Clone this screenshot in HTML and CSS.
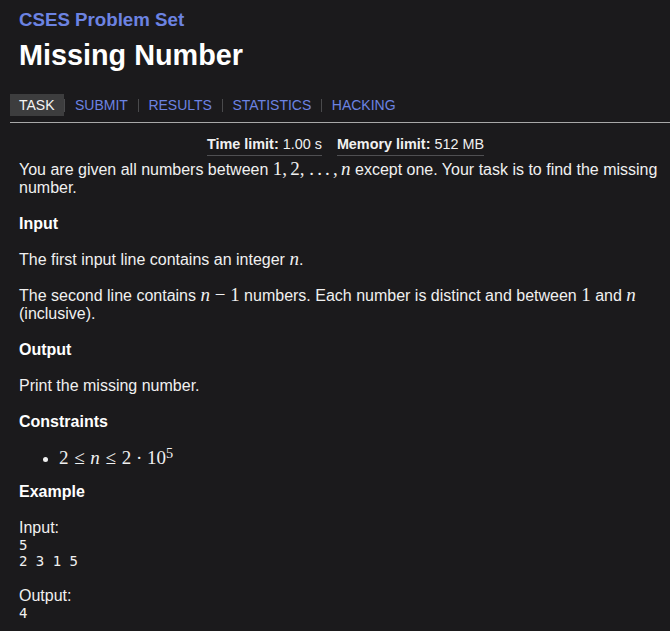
FILE: index.html
```html
<!DOCTYPE html>
<html lang="en">
<head>
<meta charset="utf-8">
<title>CSES - Missing Number</title>
<link rel="stylesheet" href="styles.css">
</head>
<body>
<header class="header">
  <a class="site-title" href="#">CSES Problem Set</a>
  <h1 class="page-title">Missing Number</h1>
</header>
<nav class="nav">
  <a class="nav-item current" href="#">TASK</a>
  <span class="sep"></span>
  <a class="nav-item" href="#">SUBMIT</a>
  <span class="sep"></span>
  <a class="nav-item" href="#">RESULTS</a>
  <span class="sep"></span>
  <a class="nav-item" href="#">STATISTICS</a>
  <span class="sep"></span>
  <a class="nav-item" href="#">HACKING</a>
</nav>
<main class="content">
  <ul class="limits">
    <li class="limit"><b>Time limit:</b> 1.00 s</li>
    <li class="limit"><b>Memory limit:</b> 512 MB</li>
  </ul>
  <div class="statement">
    <p class="para">You are given all numbers between <span class="m">1,<span class="th"></span>2,<span class="th"></span><span class="dots">...</span>,<span class="th"></span><i>n</i></span> except one. Your task is to find the missing number.</p>
    <h2 class="sub">Input</h2>
    <p class="para">The first input line contains an integer <span class="m"><i>n</i></span>.</p>
    <p class="para">The second line contains <span class="m"><i>n</i><span class="bin">−</span>1</span> numbers. Each number is distinct and between <span class="m">1</span> and <span class="m"><i>n</i></span> (inclusive).</p>
    <h2 class="sub">Output</h2>
    <p class="para">Print the missing number.</p>
    <h2 class="sub">Constraints</h2>
    <ul class="constraints">
      <li class="constraint"><span class="m">2<span class="rel">≤</span><i>n</i><span class="rel">≤</span>2<span class="bin">·</span>10<sup class="sup">5</sup></span></li>
    </ul>
    <h2 class="sub">Example</h2>
    <p class="label">Input:</p>
    <pre class="sample">5
2 3 1 5</pre>
    <p class="label">Output:</p>
    <pre class="sample">4</pre>
  </div>
</main>
</body>
</html>
```
FILE: styles.css
```css
html, body {
  background: #1b1a1c;
}
body {
  margin: 0;
  color: #f0f0f0;
  font-family: "Liberation Sans", Arial, sans-serif;
  font-size: 16px;
  line-height: 18px;
}
.header {
  padding: 9px 0 0 19px;
}
.site-title {
  display: block;
  font-size: 18.7px;
  line-height: 22px;
  font-weight: bold;
  color: #6c83e2;
  text-decoration: none;
}
.page-title {
  margin: 7px 0 0;
  font-size: 28.8px;
  line-height: 34px;
  font-weight: bold;
  color: #ffffff;
}
.nav {
  display: flex;
  align-items: center;
  margin: 22px 0 0 10px;
  padding-bottom: 6px;
  border-bottom: 1px solid #a8a8a8;
}
.nav-item {
  font-size: 14px;
  line-height: 16px;
  padding: 3px 9px;
  color: #6c83e2;
  text-decoration: none;
}
.nav-item.current {
  background: #3d3d3e;
  color: #f4f4f4;
}
.sep {
  width: 1px;
  height: 13px;
  margin: 0 0.75px;
  background: #4a4a4c;
}
.content {
  padding: 0 5px 0 19px;
}
.limits {
  display: flex;
  justify-content: center;
  gap: 15px;
  list-style: none;
  margin: 13px 0 0;
  padding: 0 0 0 7px;
}
.limit {
  font-size: 14.4px;
  line-height: 16px;
  padding-bottom: 3px;
  border-bottom: 1px solid #4f4f52;
}
.statement {
  margin-top: 5px;
}
.para {
  margin: 0 0 18px;
}
.sub {
  margin: 0 0 18px;
  font-size: 16px;
  line-height: 18px;
  font-weight: bold;
  color: #ffffff;
}
.m {
  font-family: "Liberation Serif", "Times New Roman", serif;
  font-size: 19px;
  line-height: 0;
}
.m i {
  font-style: italic;
}
.th {
  display: inline-block;
  width: 0.167em;
}
.dots {
  letter-spacing: 0.17em;
  margin-left: 0.08em;
}
.rel {
  margin: 0 0.3em;
}
.bin {
  margin: 0 0.25em;
}
.sup {
  font-size: 0.75em;
  line-height: 0;
  vertical-align: 0.42em;
}
.constraints {
  margin: 1px 0 14px;
  padding-left: 40px;
}
.constraint {
  line-height: 20px;
  font-size: 16px;
}
.label {
  margin: 0;
}
.sample {
  margin: 0 0 18px;
  font-family: "DejaVu Sans Mono", monospace;
  font-size: 14px;
  line-height: 16px;
  color: #f0f0f0;
}
```
